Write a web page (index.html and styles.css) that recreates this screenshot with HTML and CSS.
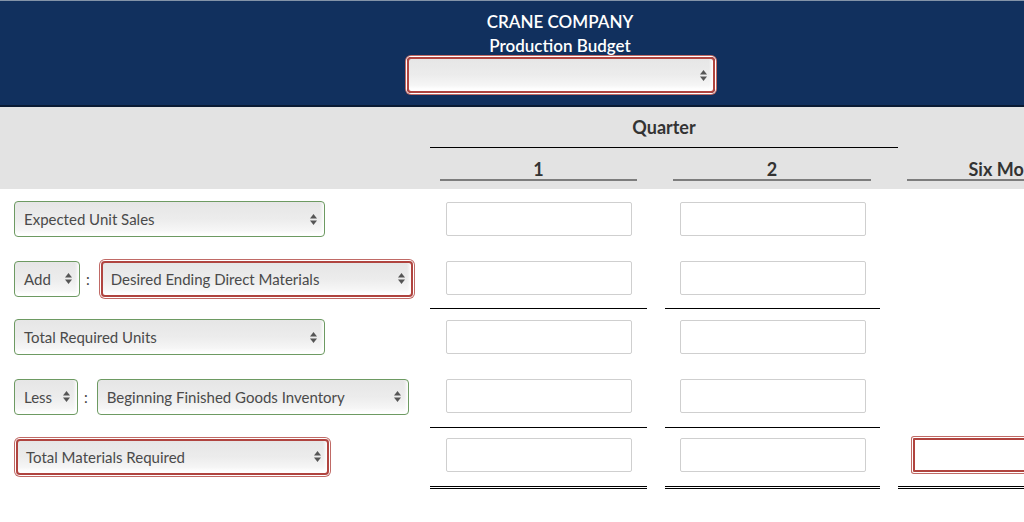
FILE: index.html
```html
<!DOCTYPE html>
<html>
<head>
<meta charset="utf-8">
<link rel="stylesheet" href="styles.css">
</head>
<body>
<div class="page">
  <header class="hdr">
    <div class="title">CRANE COMPANY</div>
    <div class="title">Production Budget</div>
    <div class="sel err hsel"><span></span><svg class="arr" viewBox="0 0 7 11" width="7" height="11"><polygon points="0,4.5 3.5,0 7,4.5"/><polygon points="0,6.5 7,6.5 3.5,11"/></svg></div>
  </header>

  <div class="colhead">
    <div class="qtr">Quarter</div>
    <div class="num n1">1</div>
    <div class="num n2">2</div>
    <div class="num n3">Six Months</div>
  </div>

  <div class="row r1">
    <div class="lab">
      <div class="sel w311"><span>Expected Unit Sales</span><svg class="arr" viewBox="0 0 7 11" width="7" height="11"><polygon points="0,4.5 3.5,0 7,4.5"/><polygon points="0,6.5 7,6.5 3.5,11"/></svg></div>
    </div>
    <div class="amt a1"><input class="inp" type="text"></div>
    <div class="amt a2"><input class="inp" type="text"></div>
  </div>

  <div class="row r2">
    <div class="lab">
      <div class="sel w66"><span>Add</span><svg class="arr" viewBox="0 0 7 11" width="7" height="11"><polygon points="0,4.5 3.5,0 7,4.5"/><polygon points="0,6.5 7,6.5 3.5,11"/></svg></div>
      <span class="colon">:</span>
      <div class="sel err w312"><span>Desired Ending Direct Materials</span><svg class="arr" viewBox="0 0 7 11" width="7" height="11"><polygon points="0,4.5 3.5,0 7,4.5"/><polygon points="0,6.5 7,6.5 3.5,11"/></svg></div>
    </div>
    <div class="amt a1 line"><input class="inp" type="text"></div>
    <div class="amt a2 line"><input class="inp" type="text"></div>
  </div>

  <div class="row r3">
    <div class="lab">
      <div class="sel w311"><span>Total Required Units</span><svg class="arr" viewBox="0 0 7 11" width="7" height="11"><polygon points="0,4.5 3.5,0 7,4.5"/><polygon points="0,6.5 7,6.5 3.5,11"/></svg></div>
    </div>
    <div class="amt a1"><input class="inp" type="text"></div>
    <div class="amt a2"><input class="inp" type="text"></div>
  </div>

  <div class="row r4">
    <div class="lab">
      <div class="sel w64"><span>Less</span><svg class="arr" viewBox="0 0 7 11" width="7" height="11"><polygon points="0,4.5 3.5,0 7,4.5"/><polygon points="0,6.5 7,6.5 3.5,11"/></svg></div>
      <span class="colon">:</span>
      <div class="sel w312"><span>Beginning Finished Goods Inventory</span><svg class="arr" viewBox="0 0 7 11" width="7" height="11"><polygon points="0,4.5 3.5,0 7,4.5"/><polygon points="0,6.5 7,6.5 3.5,11"/></svg></div>
    </div>
    <div class="amt a1 line"><input class="inp" type="text"></div>
    <div class="amt a2 line"><input class="inp" type="text"></div>
  </div>

  <div class="row r5">
    <div class="lab">
      <div class="sel err w313"><span>Total Materials Required</span><svg class="arr" viewBox="0 0 7 11" width="7" height="11"><polygon points="0,4.5 3.5,0 7,4.5"/><polygon points="0,6.5 7,6.5 3.5,11"/></svg></div>
    </div>
    <div class="amt a1 dbl"><input class="inp" type="text"></div>
    <div class="amt a2 dbl"><input class="inp" type="text"></div>
    <div class="amt a3 dbl"><input class="inp err-inp" type="text"></div>
  </div>
</div>
</body>
</html>
```

FILE: styles.css
```css
html, body {
  margin: 0;
  padding: 0;
  background: #fff;
  overflow: hidden;
}
body {
  font-family: Lato, "Open Sans", sans-serif;
  color: #333;
}
.page {
  width: 1120px;
}

/* header */
.hdr {
  background: #11305e;
  border-top: 1px solid #8393a8;
  border-bottom: 2px solid #0a1a33;
  height: 104px;
  box-sizing: content-box;
  display: flex;
  flex-direction: column;
  align-items: center;
}
.title {
  color: #fff;
  font-size: 17px;
  font-weight: 600;
  line-height: 24px;
}
.hdr .title:first-child {
  margin-top: 9px;
}
.hsel {
  margin-top: 3px;
  width: 308px;
  height: 29px;
}

/* column heading band */
.colhead {
  background: #e3e3e3;
  height: 82px;
  display: grid;
  grid-template-columns: 430px 217px 18px 215px 18px 222px;
  grid-template-rows: 41px 41px;
}
.qtr {
  grid-column: 2 / 6;
  grid-row: 1;
  border-bottom: 1px solid #000;
  text-align: center;
  font-weight: 700;
  font-size: 18px;
  line-height: 20px;
  padding-top: 10px;
  color: #333;
}
.num {
  grid-row: 2;
  align-self: start;
  text-align: center;
  font-weight: 700;
  font-size: 18px;
  line-height: 20px;
  padding-top: 11px;
  border-bottom: 2px solid #7d7d7d;
  color: #333;
}
.n1 { grid-column: 2; margin: 0 10px; }
.n2 { grid-column: 4; margin: 0 9px 0 8px; }
.n3 { grid-column: 6; margin: 0 0 0 9px; white-space: nowrap; }

/* rows */
.row {
  display: grid;
  grid-template-columns: 430px 217px 18px 215px 18px 222px;
  --pt: 13px;
  --pb: 12px;
}
.r2 { --pb: 13px; }
.r3 { --pt: 11px; }
.r4 { --pb: 14px; }
.r5 { --pt: 10px; --pb: 14px; }

.lab {
  grid-column: 1;
  padding: var(--pt) 0 var(--pb) 14px;
  display: flex;
  align-items: center;
}
.amt {
  padding: var(--pt) 0 var(--pb) 15px;
}
.a1 { grid-column: 2; padding-left: 16px; }
.a2 { grid-column: 4; }
.a3 { grid-column: 6; }
.line { border-bottom: 1px solid #000; }
.dbl { border-bottom: 3px double #000; }

.inp {
  display: block;
  box-sizing: border-box;
  width: 186px;
  height: 34px;
  margin: 0;
  border: 1px solid #cfcfcf;
  border-radius: 2px;
  background: #fff;
  outline: none;
}
.err-inp {
  width: 200px;
  border: 2px solid #b0443f;
  border-radius: 1px;
  box-shadow: 0 0 0 1px #fff, 0 0 0 2px #c06a66;
}

/* select look-alike */
.sel {
  box-sizing: border-box;
  height: 36px;
  margin: -1px 0;
  border: 1px solid #6d9a62;
  border-radius: 4px;
  background: linear-gradient(to bottom, #e6e6e6 0%, #ececec 50%, #f5f5f5 80%, #fdfdfd 100%);
  box-shadow: inset -2px -3px 3px rgba(255,255,255,0.9);
  display: flex;
  align-items: center;
  justify-content: space-between;
  padding: 0 7px 0 9px;
  font-size: 15px;
  color: #4a4a4a;
  white-space: nowrap;
}
.sel.err {
  border: 2px solid #b0443f;
  box-shadow: inset -2px -3px 3px rgba(255,255,255,0.9), 0 0 0 1px #fff, 0 0 0 2px #c06a66;
  margin-left: 2px;
  padding-left: 8px;
  padding-right: 6px;
}
.arr {
  fill: #555;
  flex: none;
}
.w311 { width: 311px; }
.w66 { width: 66px; }
.w64 { width: 64px; }
.w312 { width: 312px; }
.w313 { width: 313px; }
.colon {
  margin: 0 9px 0 6px;
  font-size: 15px;
  color: #444;
}
```
